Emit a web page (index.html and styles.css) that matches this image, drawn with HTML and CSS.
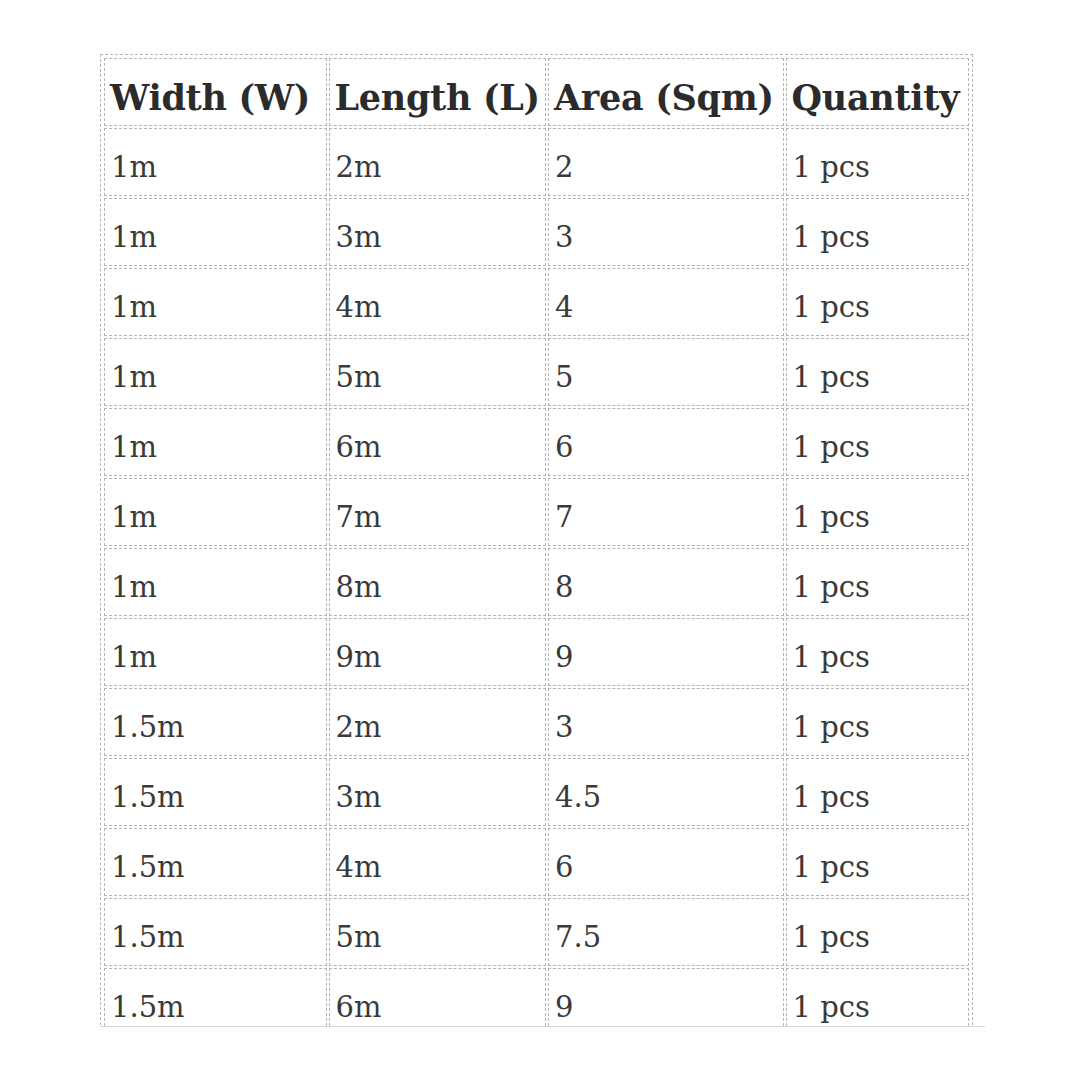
FILE: index.html
```html
<!DOCTYPE html>
<html>
<head>
<meta charset="utf-8">
<link rel="stylesheet" href="styles.css">
</head>
<body>
<div class="frame">
<table class="sizes">
<thead>
<tr><th class="c1">Width (W)</th><th class="c2">Length (L)</th><th class="c3">Area (Sqm)</th><th class="c4">Quantity</th></tr>
</thead>
<tbody>
<tr><td>1m</td><td>2m</td><td>2</td><td>1 pcs</td></tr>
<tr><td>1m</td><td>3m</td><td>3</td><td>1 pcs</td></tr>
<tr><td>1m</td><td>4m</td><td>4</td><td>1 pcs</td></tr>
<tr><td>1m</td><td>5m</td><td>5</td><td>1 pcs</td></tr>
<tr><td>1m</td><td>6m</td><td>6</td><td>1 pcs</td></tr>
<tr><td>1m</td><td>7m</td><td>7</td><td>1 pcs</td></tr>
<tr><td>1m</td><td>8m</td><td>8</td><td>1 pcs</td></tr>
<tr><td>1m</td><td>9m</td><td>9</td><td>1 pcs</td></tr>
<tr><td>1.5m</td><td>2m</td><td>3</td><td>1 pcs</td></tr>
<tr><td>1.5m</td><td>3m</td><td>4.5</td><td>1 pcs</td></tr>
<tr><td>1.5m</td><td>4m</td><td>6</td><td>1 pcs</td></tr>
<tr><td>1.5m</td><td>5m</td><td>7.5</td><td>1 pcs</td></tr>
<tr><td>1.5m</td><td>6m</td><td>9</td><td>1 pcs</td></tr>
</tbody>
</table>
</div>
</body>
</html>
```
FILE: styles.css
```css
html, body {
  margin: 0;
  padding: 0;
  background: #ffffff;
}
body {
  font-family: "DejaVu Serif", "Liberation Serif", serif;
  color: #3a3a3a;
}
.frame {
  margin-left: 100px;
  margin-top: 54px;
  width: 885px;
  height: 972px;
  overflow: hidden;
  border-bottom: 1px solid #d6d6d6;
}
.sizes {
  border: 1px dashed #b4b4b4;
  border-spacing: 2px;
  padding: 1px;
  table-layout: fixed;
  width: 873px;
}
.sizes th,
.sizes td {
  border: 1px dashed #b4b4b4;
  height: 68px;
  padding: 10px 0 0 6px;
  text-align: left;
  vertical-align: middle;
  white-space: nowrap;
  box-sizing: border-box;
}
.sizes th {
  font-weight: bold;
  font-size: 35px;
  color: #2b2b2b;
  padding-left: 5px;
  letter-spacing: -0.3px;
}
.sizes td {
  font-size: 29px;
}
.c1 { width: 222px; }
.c2 { width: 217px; }
.c3 { width: 235px; }
.c4 { width: 183px; }
```
